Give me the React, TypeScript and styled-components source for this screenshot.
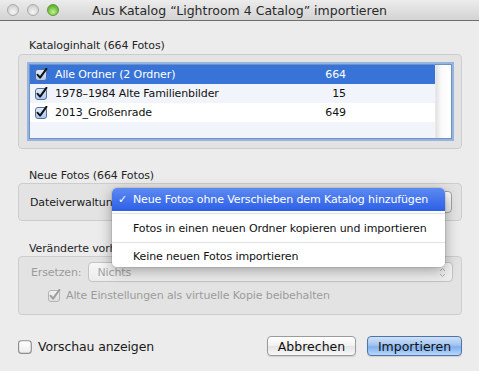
import React from "react";
import styled, { createGlobalStyle } from "styled-components";

const GlobalStyle = createGlobalStyle`
  html, body {
    margin: 0;
    padding: 0;
    background: #ececec;
  }
  body {
    font-family: "DejaVu Sans", "Lucida Grande", sans-serif;
    color: #1a1a1a;
  }
`;

interface Folder {
  name: string;
  count: number;
}

const folders: Folder[] = [
  { name: "Alle Ordner (2 Ordner)", count: 664 },
  { name: "1978–1984 Alte Familienbilder", count: 15 },
  { name: "2013_Großenrade", count: 649 },
];

const menuItems = [
  "Neue Fotos ohne Verschieben dem Katalog hinzufügen",
  "Fotos in einen neuen Ordner kopieren und importieren",
  "Keine neuen Fotos importieren",
];

const CheckBox: React.FC<{ checked?: boolean; disabled?: boolean; size?: number }> = ({
  checked,
  disabled,
  size = 12,
}) => {
  const id = disabled ? "cbDis" : checked ? "cbOn" : "cbOff";
  return (
    <svg width={size + 1} height={size + 1} viewBox="0 0 13 13">
      <defs>
        <linearGradient id={id} x1="0" y1="0" x2="0" y2="1">
          {disabled ? (
            <>
              <stop offset="0" stopColor="#f4f4f4" />
              <stop offset="1" stopColor="#dcdcdc" />
            </>
          ) : checked ? (
            <>
              <stop offset="0" stopColor="#e3edfa" />
              <stop offset="1" stopColor="#a9c6ee" />
            </>
          ) : (
            <>
              <stop offset="0" stopColor="#ffffff" />
              <stop offset="1" stopColor="#ececec" />
            </>
          )}
        </linearGradient>
      </defs>
      <rect
        x="0.5"
        y="1.5"
        width="11"
        height="11"
        rx="2.5"
        fill={`url(#${id})`}
        stroke={disabled ? "#b4b4b4" : checked ? "#51709e" : "#8e8e8e"}
      />
      {checked && (
        <path
          d="M2.6 6.8 L5.1 9.6 L11.4 0.8"
          fill="none"
          stroke={disabled ? "#9d9d9d" : "#111"}
          strokeWidth="2"
          strokeLinecap="round"
          strokeLinejoin="round"
        />
      )}
    </svg>
  );
};

const Arrows: React.FC<{ color?: string }> = ({ color = "#555" }) => (
  <svg width="7" height="11" viewBox="0 0 7 11">
    <path d="M1 4 L3.5 1.5 L6 4" fill="none" stroke={color} strokeWidth="1" />
    <path d="M1 7 L3.5 9.5 L6 7" fill="none" stroke={color} strokeWidth="1" />
  </svg>
);

export default function App() {
  // the file-handling pop-up is open, so its own label sits under the menu
  const menuOpen = true;

  return (
    <Window>
      <GlobalStyle />
      <TitleBar>
        <Lights>
          <Light />
          <Light />
          <Light $active />
        </Lights>
        <Title>Aus Katalog “Lightroom 4 Catalog” importieren</Title>
        <span />
      </TitleBar>

      <Content>
        <SectionLabel>Kataloginhalt (664 Fotos)</SectionLabel>
        <CatalogBox>
          <List>
            <Rows>
              {folders.map((f, i) => (
                <Row key={f.name} $selected={i === 0} $alt={i % 2 === 1}>
                  <CheckBox checked />
                  <RowName>{f.name}</RowName>
                  <RowCount>{f.count}</RowCount>
                </Row>
              ))}
              <Filler />
            </Rows>
            <ScrollTrack />
          </List>
        </CatalogBox>

        <SectionLabel $top={20}>Neue Fotos (664 Fotos)</SectionLabel>
        <FileBox>
          <FieldLabel $clip={menuOpen ? 82 : undefined}>Dateiverwaltung:</FieldLabel>
          <PopUp>
            {!menuOpen && <PopUpText>{menuItems[0]}</PopUpText>}
            <Arrows />
          </PopUp>
        </FileBox>

        <SectionLabel $top={21} $clip={menuOpen ? 83 : undefined}>
          Veränderte vorhandene Fotos (0 Fotos)
        </SectionLabel>
        <ChangedBox>
          <FieldRow>
            <FieldLabel $disabled>Ersetzen:</FieldLabel>
            <PopUp $disabled>
              <PopUpText>Nichts</PopUpText>
              <Arrows color="#b0b0b0" />
            </PopUp>
          </FieldRow>
          <CheckRow>
            <CheckBox checked disabled />
            <FieldLabel $disabled>Alte Einstellungen als virtuelle Kopie beibehalten</FieldLabel>
          </CheckRow>
        </ChangedBox>

        <Footer>
          <PreviewToggle>
            <CheckBox size={14} />
            <span>Vorschau anzeigen</span>
          </PreviewToggle>
          <Buttons>
            <Button>Abbrechen</Button>
            <Button $primary>Importieren</Button>
          </Buttons>
        </Footer>
      </Content>

      {menuOpen && (
        <Menu>
          {menuItems.map((item, i) => (
            <React.Fragment key={item}>
              {i > 0 && <MenuSeparator />}
              <MenuItem $highlighted={i === 0} $tall={i === 1}>
                <MenuCheck>{i === 0 ? "✓" : ""}</MenuCheck>
                {item}
              </MenuItem>
            </React.Fragment>
          ))}
        </Menu>
      )}
    </Window>
  );
}

/**
 *
 * Styles
 *
 */

const Window = styled.div`
  position: relative;
  width: 479px;
  height: 371px;
  overflow: hidden;
  background: #ececec;
  letter-spacing: -0.12px;
`;

const TitleBar = styled.div`
  display: grid;
  grid-template-columns: 64px 1fr 64px;
  align-items: center;
  height: 21px;
  box-sizing: border-box;
  border-bottom: 1px solid #6e6e6e;
  background: linear-gradient(#ececec, #d3d3d3);
`;

const Lights = styled.div`
  display: flex;
  gap: 8px;
  padding-left: 7px;
`;

const Light = styled.div<{ $active?: boolean }>`
  width: 12px;
  height: 12px;
  border-radius: 50%;
  box-sizing: border-box;
  border: 1px solid ${({ $active }) => ($active ? "#5c9a3c" : "#ababab")};
  background: ${({ $active }) =>
    $active
      ? "radial-gradient(circle at 50% 70%, #c6f08e, #6fbf3f 60%, #4f9a2c)"
      : "radial-gradient(circle at 50% 70%, #f7f7f7, #d8d8d8 60%, #c4c4c4)"};
`;

const Title = styled.div`
  text-align: center;
  font-size: 12.5px;
  letter-spacing: 0;
  color: #2a2a2a;
  white-space: nowrap;
`;

const Content = styled.div`
  display: flex;
  flex-direction: column;
  padding: 18px 17px 0 18px;
`;

const SectionLabel = styled.div<{ $top?: number; $clip?: number }>`
  margin-top: ${({ $top }) => $top ?? 0}px;
  margin-left: 11px;
  max-width: ${({ $clip }) => ($clip ? `${$clip}px` : "none")};
  overflow: hidden;
  font-size: 11px;
  line-height: 14px;
  color: #262626;
  white-space: nowrap;
`;

const GroupBox = styled.div`
  box-sizing: border-box;
  background: #e3e3e3;
  border: 1px solid #cdcdcd;
  border-radius: 4px;
`;

const CatalogBox = styled(GroupBox)`
  height: 95px;
  padding: 9px 9px 9px 10px;
  margin-top: 1px;
`;

const List = styled.div`
  display: flex;
  height: 75px;
  box-sizing: border-box;
  border: 1px solid #6d92c8;
  box-shadow: 0 0 0 2px rgba(126, 164, 222, 0.75);
  background: #fff;
`;

const Rows = styled.div`
  flex: 1;
  display: flex;
  flex-direction: column;
`;

const Row = styled.div<{ $selected?: boolean; $alt?: boolean }>`
  display: flex;
  align-items: center;
  height: 19px;
  flex: none;
  padding-left: 5px;
  font-size: 11px;
  color: ${({ $selected }) => ($selected ? "#fff" : "#111")};
  background: ${({ $selected, $alt }) => ($selected ? "#3874d7" : $alt ? "#f1f4fa" : "#fff")};
`;

const RowName = styled.span`
  flex: 1;
  margin-left: 7px;
  white-space: nowrap;
`;

const RowCount = styled.span`
  width: 40px;
  margin-right: 89px;
  text-align: right;
`;

const Filler = styled.div`
  flex: 1;
  background: #f1f4fa;
`;

const ScrollTrack = styled.div`
  width: 15px;
  background: linear-gradient(to right, #e2e2e2, #fafafa 35%, #fff);
  border-left: 1px solid #e9e9e9;
`;

const FileBox = styled(GroupBox)`
  display: flex;
  align-items: center;
  gap: 14px;
  height: 38px;
  padding: 0 9px 0 11px;
`;

const FieldLabel = styled.span<{ $disabled?: boolean; $clip?: number }>`
  flex: none;
  max-width: ${({ $clip }) => ($clip ? `${$clip}px` : "none")};
  overflow: hidden;
  font-size: 11px;
  white-space: nowrap;
  color: ${({ $disabled }) => ($disabled ? "#9c9c9c" : "#1a1a1a")};
`;

const PopUp = styled.div<{ $disabled?: boolean }>`
  flex: 1;
  min-width: 0;
  display: flex;
  align-items: center;
  justify-content: space-between;
  height: ${({ $disabled }) => ($disabled ? 20 : 22)}px;
  box-sizing: border-box;
  padding: 0 6px 0 8px;
  border: 1px solid ${({ $disabled }) => ($disabled ? "#c4c4c4" : "#a3a3a3")};
  border-radius: 4px;
  font-size: 11px;
  color: ${({ $disabled }) => ($disabled ? "#a4a4a4" : "#1a1a1a")};
  background: ${({ $disabled }) =>
    $disabled ? "linear-gradient(#f7f7f7, #ececec)" : "linear-gradient(#ffffff, #e9e9e9)"};

  svg {
    margin-left: auto;
  }
`;

const PopUpText = styled.span`
  white-space: nowrap;
  overflow: hidden;
`;

const ChangedBox = styled(GroupBox)`
  display: flex;
  flex-direction: column;
  height: 59px;
  padding: 5px 8px 0 12px;
`;

const FieldRow = styled.div`
  display: flex;
  align-items: center;
  gap: 7px;
`;

const CheckRow = styled.div`
  display: flex;
  align-items: center;
  gap: 5px;
  margin-top: 7px;
  padding-left: 17px;
`;

const Footer = styled.div`
  display: flex;
  align-items: center;
  justify-content: space-between;
  margin-top: 21px;
`;

const PreviewToggle = styled.label`
  display: flex;
  align-items: center;
  gap: 5px;
  font-size: 12.5px;
  color: #1a1a1a;
`;

const Buttons = styled.div`
  display: flex;
  gap: 11px;
`;

const Button = styled.button<{ $primary?: boolean }>`
  height: 20px;
  width: ${({ $primary }) => ($primary ? 95 : 89)}px;
  padding: 0;
  font-family: inherit;
  font-size: 12.5px;
  letter-spacing: 0;
  color: #111;
  border-radius: 4px;
  border: 1px solid ${({ $primary }) => ($primary ? "#5174a8" : "#9b9b9b")};
  background: ${({ $primary }) =>
    $primary
      ? "linear-gradient(#cfe2fa 0%, #a2c4f0 45%, #7fb0ef 55%, #b7d6fa 100%)"
      : "linear-gradient(#ffffff, #f1f1f1 50%, #e4e4e4 51%, #f7f7f7)"};
  box-shadow: 0 1px 1px rgba(0, 0, 0, 0.12);
`;

const Menu = styled.div`
  position: absolute;
  left: 112px;
  top: 188px;
  width: 333px;
  background: rgba(255, 255, 255, 0.98);
  border-radius: 5px;
  box-shadow: 0 4px 14px rgba(0, 0, 0, 0.35), 0 0 0 1px rgba(0, 0, 0, 0.08);
  overflow: hidden;
`;

const MenuItem = styled.div<{ $highlighted?: boolean; $tall?: boolean }>`
  display: flex;
  align-items: center;
  height: ${({ $highlighted, $tall }) => ($highlighted ? 23 : $tall ? 24 : 22)}px;
  font-size: 11px;
  white-space: nowrap;
  color: ${({ $highlighted }) => ($highlighted ? "#fff" : "#111")};
  background: ${({ $highlighted }) =>
    $highlighted ? "linear-gradient(#5d8af2, #2c5fe6)" : "transparent"};
`;

const MenuCheck = styled.span`
  width: 21px;
  padding-left: 6px;
  box-sizing: border-box;
  flex: none;
`;

const MenuSeparator = styled.div`
  height: 1px;
  margin: 2px 0;
  background: #e2e2e2;
`;
